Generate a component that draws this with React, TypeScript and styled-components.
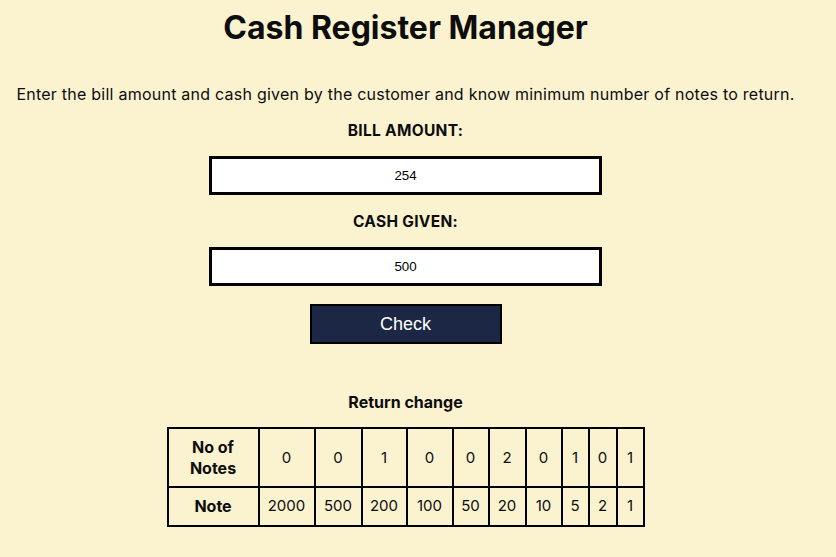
import React, { useState } from "react";
import styled, { createGlobalStyle } from "styled-components";

const Global = createGlobalStyle`
  html, body { margin: 0; padding: 0; }
  body {
    background: #fbf2d0;
    color: #0d0d0d;
    font-family: Inter, "Noto Sans", sans-serif;
  }
`;

const Page = styled.main`
  width: 795px;
  margin-left: 8px;
  display: flex;
  flex-direction: column;
  align-items: center;
`;

const Title = styled.h1`
  margin: 8px 0 0;
  font-size: 32px;
  line-height: 40px;
  font-weight: 700;
`;

const Intro = styled.p`
  margin: 36px 0 0;
  font-size: 16px;
  line-height: 20px;
  letter-spacing: 0.24px;
  text-align: center;
`;

const Label = styled.label<{ $gap: number }>`
  margin-top: ${(p) => p.$gap}px;
  font-size: 15.5px;
  line-height: 20px;
  font-weight: 700;
  letter-spacing: 0.3px;
`;

const Field = styled.input`
  margin-top: 15px;
  width: 393px;
  height: 39px;
  box-sizing: border-box;
  border: 3px solid #000;
  background: #fff;
  text-align: center;
  font-family: "Liberation Sans", Arial, sans-serif;
  font-size: 13.333px;
  color: #000;
  outline: none;
`;

const CheckButton = styled.button`
  margin-top: 18px;
  width: 192px;
  height: 40px;
  box-sizing: border-box;
  border: 2px solid #000;
  background: #1b2745;
  color: #fff;
  font-family: "Liberation Sans", Arial, sans-serif;
  font-size: 18px;
  cursor: pointer;
`;

const Caption = styled.h2`
  margin: 48px 0 0;
  font-size: 16px;
  line-height: 20px;
  font-weight: 700;
`;

const Table = styled.table`
  margin-top: 15px;
  border-collapse: collapse;
  table-layout: fixed;
  width: 476px;
`;

const Col = styled.col<{ $w: number }>`
  width: ${(p) => p.$w}px;
`;

const Head = styled.th`
  border: 2px solid #000;
  padding: 8px 0;
  font-size: 16px;
  line-height: 20.5px;
  font-weight: 700;
  text-align: center;
`;

const Cell = styled.td`
  border: 2px solid #000;
  padding: 8px 0;
  font-size: 15px;
  line-height: 20px;
  text-align: center;
  white-space: nowrap;
`;

const notes = [2000, 500, 200, 100, 50, 20, 10, 5, 2, 1];
const counts = [0, 0, 1, 0, 0, 2, 0, 1, 0, 1];
const widths = [91, 56, 47, 45, 46, 36, 37, 36, 27, 28, 27];

export default function App() {
  const [bill, setBill] = useState("254");
  const [cash, setCash] = useState("500");
  return (
    <>
      <Global />
      <Page>
        <Title>Cash Register Manager</Title>
        <Intro>
          Enter the bill amount and cash given by the customer and know minimum
          number of notes to return.
        </Intro>
        <Label $gap={17} htmlFor="bill">BILL AMOUNT:</Label>
        <Field id="bill" value={bill} onChange={(e) => setBill(e.target.value)} />
        <Label $gap={17} htmlFor="cash">CASH GIVEN:</Label>
        <Field id="cash" value={cash} onChange={(e) => setCash(e.target.value)} />
        <CheckButton>Check</CheckButton>
        <Caption>Return change</Caption>
        <Table>
          <colgroup>
            {widths.map((w, i) => (
              <Col key={i} $w={w} />
            ))}
          </colgroup>
          <tbody>
            <tr>
              <Head>
                No of
                <br />
                Notes
              </Head>
              {counts.map((c, i) => (
                <Cell key={i}>{c}</Cell>
              ))}
            </tr>
            <tr>
              <Head>Note</Head>
              {notes.map((n) => (
                <Cell key={n}>{n}</Cell>
              ))}
            </tr>
          </tbody>
        </Table>
      </Page>
    </>
  );
}
